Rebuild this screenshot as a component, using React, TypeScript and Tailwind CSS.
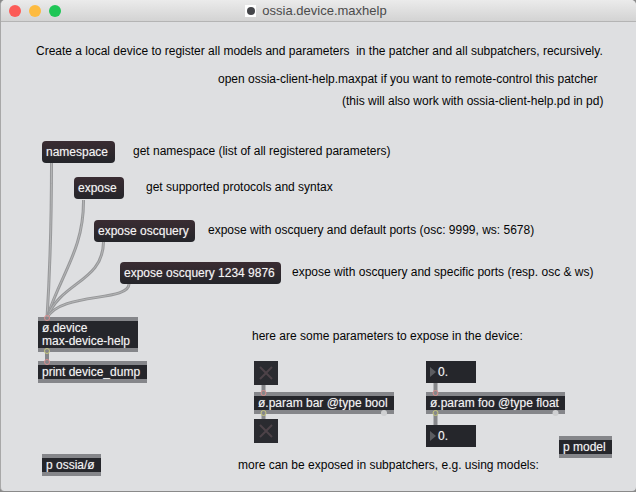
import type { ReactNode } from "react";

function Msg({ x, y, w, children }: { x: number; y: number; w: number; children: ReactNode }) {
  return (
    <div
      className="absolute flex h-[22px] items-center justify-start rounded-[4px] bg-gradient-to-b from-[#3a2c32] to-[#24252a] pb-[1px] pl-[4px] text-[12px] leading-none text-[#f4f4f4] [text-shadow:0_0_1px_#ffffff66]"
      style={{ left: x, top: y, width: w }}
    >
      {children}
    </div>
  );
}

function Obj({ x, y, w, h = 22, children }: { x: number; y: number; w: number; h?: number; children: ReactNode }) {
  return (
    <div
      className="absolute flex flex-col justify-center whitespace-pre border-y-[4px] border-[#85868a] bg-[#25262b] pl-[4px] text-[12px] leading-[13px] text-[#f4f4f4] [text-shadow:0_0_1px_#ffffff66]"
      style={{ left: x, top: y, width: w, height: h }}
    >
      {children}
    </div>
  );
}

function Label({ x, y, children }: { x: number; y: number; children: ReactNode }) {
  return (
    <div className="absolute whitespace-pre text-[12px] leading-[14px] text-[#050505]" style={{ left: x, top: y }}>
      {children}
    </div>
  );
}

function Toggle({ x, y }: { x: number; y: number }) {
  return (
    <div className="absolute h-6 w-6 bg-[#2a2b30]" style={{ left: x, top: y }}>
      <svg viewBox="0 0 24 24" className="h-6 w-6">
        <path d="M6 6 L18 18 M18 6 L6 18" stroke="#4d4248" strokeWidth="2" fill="none" />
      </svg>
    </div>
  );
}

function Num({ x, y }: { x: number; y: number }) {
  return (
    <div className="absolute h-[22px] w-[50px] bg-[#25262b] text-[12px] leading-[22px] text-[#f4f4f4] [text-shadow:0_0_1px_#ffffff66]" style={{ left: x, top: y }}>
      <svg viewBox="0 0 6 10" className="absolute left-[4px] top-[6px] h-[10px] w-[6px]">
        <path d="M0 0 L6 5 L0 10 Z" fill="#5c5d61" />
      </svg>
      <span className="absolute left-[12px] top-0">0.</span>
    </div>
  );
}

function Light({ color }: { color: string }) {
  return <span className={`h-3 w-3 rounded-full ${color}`} />;
}

const tubes = [
  "M51.5 162 C51.5 220 50 270 47 318",
  "M83.5 200 C84 250 60 275 47 318",
  "M103.5 242 C103 282 60 282 47 318",
  "M129 284 C129 302 60 292 47 318",
];

export default function App() {
  return (
    <div className="relative h-[492px] w-[636px] overflow-hidden bg-[#8a8a8a] font-['Liberation_Sans',Arial,sans-serif]">
      <div className="flex h-[491px] flex-col overflow-hidden rounded-t-[5px] rounded-b-[4px] border-l border-[#a8a8a8] bg-[#dedfe1]">
        <header className="relative flex h-[22px] shrink-0 items-center border-b border-[#b4b4b4] bg-gradient-to-b from-[#ebebeb] to-[#d3d3d3] pl-[8px]">
          <div className="flex gap-2">
            <Light color="bg-[#fc5b57]" />
            <Light color="bg-[#fdbb40]" />
            <Light color="bg-[#1fc656]" />
          </div>
          <div className="absolute inset-x-0 top-0 flex h-[22px] items-center justify-center gap-[6px] pr-[5px] text-[13px] text-[#4b4b4b]">
            <span className="flex h-[12px] w-[11px] items-center justify-center bg-white">
              <span className="h-[8px] w-[8px] rounded-full bg-[#45464a]" />
            </span>
            <span>ossia.device.maxhelp</span>
          </div>
        </header>

        <main className="relative -ml-px flex-1">
          <svg className="absolute left-0 top-[-22px] h-[492px] w-[636px]" viewBox="0 0 636 492" fill="none">
            {tubes.map((d) => (
              <g key={d}>
                <path d={d} stroke="#97989a" strokeWidth="3" />
                <path d={d} stroke="#b4b5b6" strokeWidth="1" />
              </g>
            ))}
            <g stroke="#86878a" strokeWidth="4">
              <path d="M47 350 L47 362" />
              <path d="M263.5 385 L263.5 394" />
              <path d="M263.5 412 L263.5 420" />
              <path d="M435.5 383 L435.5 394" />
              <path d="M435.5 412 L435.5 426" />
            </g>
          </svg>

          <div className="flex flex-col items-start pl-[36px] pt-[22px]">
            <p className="whitespace-pre text-[12px] leading-[14px] text-[#050505]">
              Create a local device to register all models and parameters  in the patcher and all subpatchers, recursively.
            </p>
            <p className="ml-[182px] mt-[14px] whitespace-pre text-[12px] leading-[14px] text-[#050505]">
              open ossia-client-help.maxpat if you want to remote-control this patcher
            </p>
            <p className="ml-[306px] mt-[8px] whitespace-pre text-[12px] leading-[14px] text-[#050505]">
              (this will also work with ossia-client-help.pd in pd)
            </p>
          </div>

          <Msg x={42} y={119} w={73}>namespace</Msg>
          <Label x={133} y={122}>get namespace (list of all registered parameters)</Label>
          <Msg x={74} y={155} w={50}>expose</Msg>
          <Label x={146} y={158}>get supported protocols and syntax</Label>
          <Msg x={94} y={198} w={101}>expose oscquery</Msg>
          <Label x={208} y={201}>expose with oscquery and default ports (osc: 9999, ws: 5678)</Label>
          <Msg x={120} y={240} w={161}>expose oscquery 1234 9876</Msg>
          <Label x={292} y={243}>expose with oscquery and specific ports (resp. osc &amp; ws)</Label>

          <Obj x={38} y={295} w={100} h={35}>{"ø.device\nmax-device-help"}</Obj>
          <Obj x={38} y={339} w={109}>print device_dump</Obj>
          <Obj x={42} y={432} w={59}>p ossia/ø</Obj>

          <Label x={252} y={307}>here are some parameters to expose in the device:</Label>
          <Toggle x={254} y={339} />
          <Obj x={254} y={370} w={140}>ø.param bar @type bool</Obj>
          <Toggle x={254} y={397} />
          <Num x={426} y={339} />
          <Obj x={426} y={370} w={139}>ø.param foo @type float</Obj>
          <Num x={426} y={403} />
          <Obj x={559} y={414} w={53}>p model</Obj>
          <Label x={238} y={436}>more can be exposed in subpatchers, e.g. using models:</Label>

          <svg className="pointer-events-none absolute left-0 top-[-22px] h-[492px] w-[636px]" viewBox="0 0 636 492" fill="none">
            <g strokeWidth="1">
              <circle cx="47" cy="318" r="2.5" stroke="#d98c8c" />
              <circle cx="47" cy="351" r="2.5" stroke="#c6c77c" />
              <circle cx="47" cy="362" r="2.5" stroke="#d98c8c" />
              <circle cx="263.5" cy="393" r="2.5" stroke="#d98c8c" />
              <circle cx="263.5" cy="413" r="2.5" stroke="#c6c77c" />
              <circle cx="435.5" cy="393" r="2.5" stroke="#d98c8c" />
              <circle cx="435.5" cy="413" r="2.5" stroke="#c6c77c" />
            </g>
            <circle cx="384" cy="413" r="3" fill="#cfd0d2" />
            <circle cx="555.5" cy="413" r="3" fill="#cfd0d2" />
          </svg>
        </main>
      </div>
    </div>
  );
}
